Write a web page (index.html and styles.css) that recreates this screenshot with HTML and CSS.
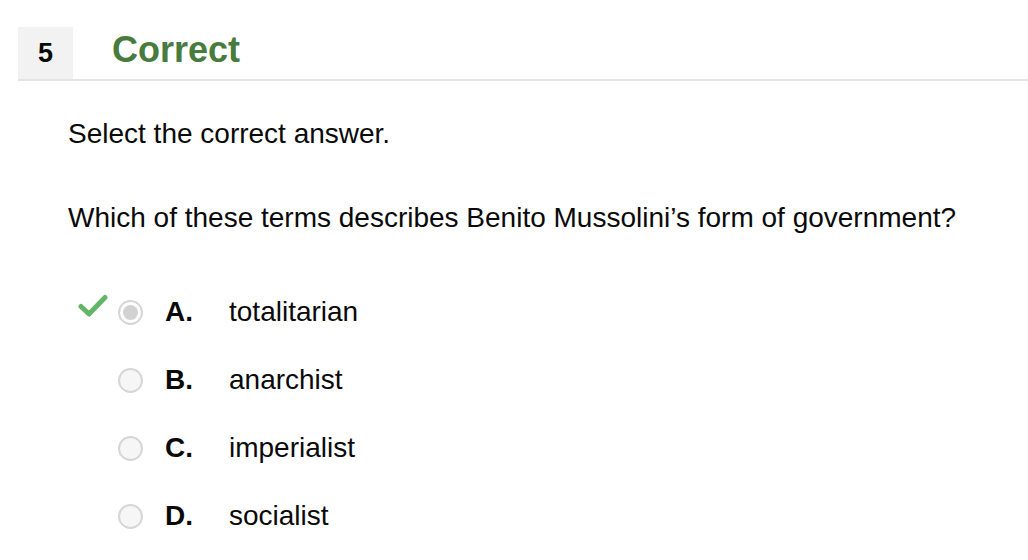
FILE: index.html
```html
<!DOCTYPE html>
<html>
<head>
<meta charset="utf-8">
<link rel="stylesheet" href="styles.css">
</head>
<body>
<div class="header">
  <div class="num">5</div>
  <div class="status">Correct</div>
</div>
<div class="content">
  <p class="instr">Select the correct answer.</p>
  <p class="question">Which of these terms describes Benito Mussolini’s form of government?</p>
  <div class="options">
    <div class="option">
      <div class="mark">
        <svg width="30" height="24" viewBox="0 0 30 24"><path d="M3 12.5 L11 20 L27 3.5" fill="none" stroke="#62b569" stroke-width="5" stroke-linecap="round" stroke-linejoin="round"/></svg>
      </div>
      <span class="radio selected"></span>
      <span class="letter">A.</span>
      <span class="text">totalitarian</span>
    </div>
    <div class="option">
      <div class="mark"></div>
      <span class="radio"></span>
      <span class="letter">B.</span>
      <span class="text">anarchist</span>
    </div>
    <div class="option">
      <div class="mark"></div>
      <span class="radio"></span>
      <span class="letter">C.</span>
      <span class="text">imperialist</span>
    </div>
    <div class="option">
      <div class="mark"></div>
      <span class="radio"></span>
      <span class="letter">D.</span>
      <span class="text">socialist</span>
    </div>
  </div>
</div>
</body>
</html>
```
FILE: styles.css
```css
html, body {
  margin: 0;
  padding: 0;
  background: #fff;
  font-family: "Liberation Sans", Arial, sans-serif;
  color: #0a0a0a;
}
.header {
  display: flex;
  align-items: stretch;
  margin: 27px 0 0 18px;
  height: 52px;
  border-bottom: 2px solid #e4e4e4;
}
.num {
  width: 55px;
  background: #f2f2f2;
  display: flex;
  align-items: center;
  justify-content: center;
  font-weight: bold;
  font-size: 27px;
  color: #0a0a0a;
}
.status {
  margin-left: 39px;
  display: flex;
  align-items: center;
  font-weight: bold;
  font-size: 36px;
  color: #487b3e;
  padding-bottom: 6px;
}
.content {
  padding-left: 68px;
}
.instr {
  margin: 37px 0 0 0;
  font-size: 28px;
  line-height: 32px;
}
.question {
  margin: 52px 0 0 0;
  font-size: 28px;
  line-height: 32px;
}
.options {
  margin-top: 44px;
  display: flex;
  flex-direction: column;
}
.option {
  display: flex;
  align-items: center;
  height: 68px;
  margin-left: 10px;
  font-size: 28px;
}
.mark {
  width: 40px;
  height: 24px;
  display: flex;
  align-items: center;
  transform: translateY(-6px);
}
.radio {
  width: 21px;
  height: 21px;
  border: 2px solid #d6d6d6;
  border-radius: 50%;
  background: #f6f6f6;
  flex: none;
  position: relative;
}
.radio.selected {
  background: #fff;
}
.radio.selected::after {
  content: "";
  position: absolute;
  left: 3px;
  top: 3px;
  width: 15px;
  height: 15px;
  border-radius: 50%;
  background: #d2d2d2;
}
.letter {
  font-weight: bold;
  margin-left: 22px;
  width: 64px;
}
.text {
  color: #0a0a0a;
}
```
